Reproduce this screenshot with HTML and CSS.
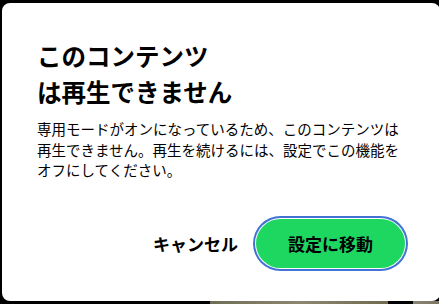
FILE: index.html
```html
<!DOCTYPE html>
<html lang="ja">
<head>
  <meta charset="UTF-8">
  <meta name="viewport" content="width=device-width, initial-scale=1.0">
  <title>再生できません</title>
  <link rel="stylesheet" href="styles.css">
</head>
<body>

<div class="page">
  <!-- Dialog -->
  <div class="dialog" role="dialog" aria-labelledby="dialogTitle">
    <h1 class="dialog-title" id="dialogTitle">このコンテンツ<br>は再生できません</h1>
    <p class="dialog-text">専用モードがオンになっているため、このコンテンツは再生できません。再生を続けるには、設定でこの機能をオフにしてください。</p>
    <div class="dialog-actions">
      <button class="btn btn-cancel">キャンセル</button>
      <button class="btn btn-primary">設定に移動</button>
    </div>
  </div>

  <!-- peek of the page behind -->
  <div class="backdrop-strip"></div>
</div>

</body>
</html>
```

FILE: styles.css
```css
body {
  margin: 0;
  padding: 0;
  background-color: #000;
  font-family: "Noto Sans CJK JP", "Noto Sans", sans-serif;
  overflow: hidden;
}

.page {
  width: 439px;
  height: 304px;
  padding-top: 3px;
  box-sizing: border-box;
}

.dialog {
  margin-left: 2px;
  width: 438px;
  height: 298px;
  box-sizing: border-box;
  padding: 35px 35px 0 35px;
  background-color: #fff;
  border-radius: 8px;
  color: #000;
}

.dialog-title {
  margin: 0;
  font-size: 24.5px;
  line-height: 36px;
  font-weight: bold;
}

.dialog-text {
  margin: 9px 0 0;
  font-size: 14.5px;
  line-height: 20.5px;
  color: #000;
}

.dialog-actions {
  display: flex;
  justify-content: flex-end;
  align-items: center;
  gap: 18px;
  margin-top: 38px;
}

.btn {
  font-family: inherit;
  font-size: 17px;
  font-weight: bold;
  border: none;
  cursor: pointer;
  background: none;
  color: #000;
  padding: 0;
}

.btn-primary {
  width: 149px;
  height: 49px;
  border-radius: 999px;
  background-color: #1ed760;
  box-shadow: 0 0 0 1px #fff, 0 0 0 3px #4272d4;
}

.backdrop-strip {
  height: 3px;
  background: linear-gradient(to right, #000 0, #000 210px, #6f6d55 210px, #8c8670 300px, #6f6a50 388px, #000 388px, #000 413px, #8a8675 413px, #7b7560 439px);
}
```
